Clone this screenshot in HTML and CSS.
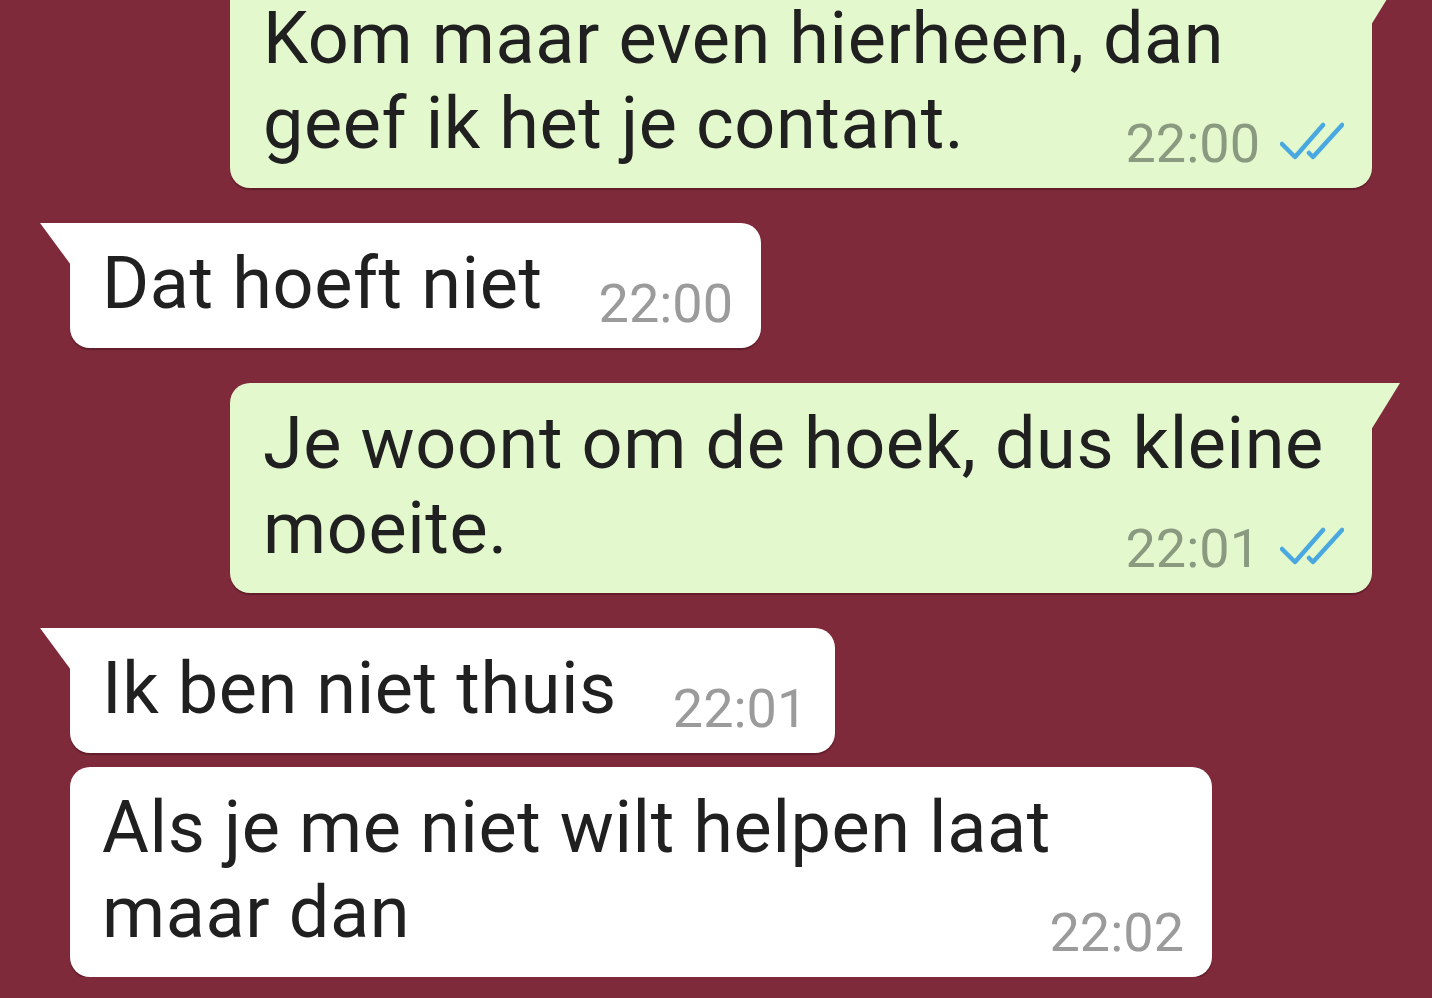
FILE: index.html
```html
<!DOCTYPE html>
<html lang="nl">
<head>
    <meta charset="UTF-8">
    <meta name="viewport" content="width=device-width, initial-scale=1.0">
    <title>Chat</title>
    <link rel="stylesheet" href="styles.css">
</head>
<body>
    <div class="chat">
        <div class="bubble out tail full">
            <div class="regel">Kom maar even hierheen, dan</div>
            <div class="laatste">
                <span>geef ik het je contant.</span>
                <span class="meta">22:00<svg class="vinkjes" viewBox="0 0 64 38" width="64" height="38"><path d="M2 22 L15 35 L43 3 M29 31 L33 35 L62 3"/></svg></span>
            </div>
        </div>

        <div class="bubble in tail">
            <div class="laatste">
                <span>Dat hoeft niet</span>
                <span class="meta">22:00</span>
            </div>
        </div>

        <div class="bubble out tail full">
            <div class="regel">Je woont om de hoek, dus kleine</div>
            <div class="laatste">
                <span>moeite.</span>
                <span class="meta">22:01<svg class="vinkjes" viewBox="0 0 64 38" width="64" height="38"><path d="M2 22 L15 35 L43 3 M29 31 L33 35 L62 3"/></svg></span>
            </div>
        </div>

        <div class="bubble in tail">
            <div class="laatste">
                <span>Ik ben niet thuis</span>
                <span class="meta">22:01</span>
            </div>
        </div>
        <div class="bubble in full">
            <div class="regel">Als je me niet wilt helpen laat</div>
            <div class="laatste">
                <span>maar dan</span>
                <span class="meta">22:02</span>
            </div>
        </div>
    </div>
</body>
</html>
```

FILE: styles.css
```css
body {
    margin: 0;
    background-color: #7e2a3b;
    font-family: Roboto, "Noto Sans", Arial, sans-serif;
    overflow: hidden;
}

.chat {
    display: flex;
    flex-direction: column;
    gap: 14px;
    padding: 0 60px 0 70px;
    margin-top: -22px;
}

.bubble {
    position: relative;
    box-sizing: border-box;
    padding: 18px 28px 22px 32px;
    border-radius: 20px;
    font-size: 72px;
    line-height: 85px;
    letter-spacing: 0.6px;
    color: #202020;
    box-shadow: 0 2px 1px rgba(50, 10, 15, 0.35);
}

.full {
    width: 1142px;
}

.tail {
    margin-top: 21px;
}

.chat > .tail:first-child {
    margin-top: 0;
}

.out {
    align-self: flex-end;
    background-color: #e3f8cc;
    padding-left: 33px;
}

.in {
    align-self: flex-start;
    background-color: #fff;
}

.out.tail {
    border-top-right-radius: 0;
}

.in.tail {
    border-top-left-radius: 0;
}

.out.tail::after {
    content: "";
    position: absolute;
    top: 0;
    right: -28px;
    width: 29px;
    height: 47px;
    background: inherit;
    clip-path: polygon(0 0, 100% 0, 0 100%);
}

.in.tail::before {
    content: "";
    position: absolute;
    top: 0;
    left: -30px;
    width: 31px;
    height: 42px;
    background: inherit;
    clip-path: polygon(0 0, 100% 0, 100% 100%);
}

.laatste {
    display: flex;
    justify-content: space-between;
    align-items: flex-end;
    gap: 56px;
}

.meta {
    font-size: 54px;
    line-height: 45px;
    letter-spacing: 0;
    white-space: nowrap;
    color: #9b9b9b;
}

.out .meta {
    color: #8a9a80;
}

.vinkjes {
    margin-left: 20px;
    vertical-align: 2px;
    fill: none;
    stroke: #4aa8e0;
    stroke-width: 4.5;
    stroke-linecap: round;
    stroke-linejoin: round;
}
```
